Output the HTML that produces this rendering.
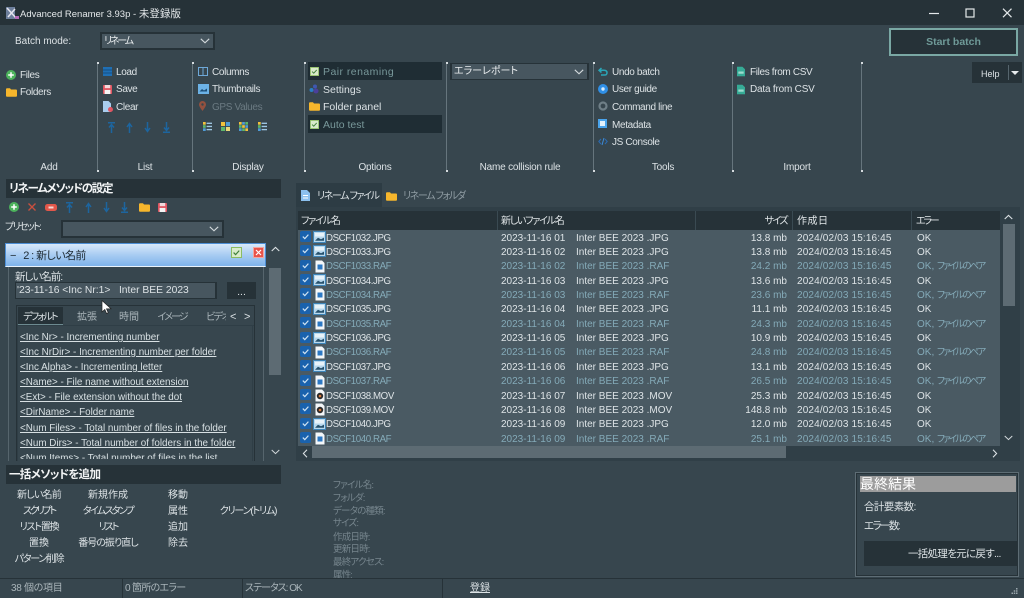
<!DOCTYPE html>
<html lang="ja"><head><meta charset="utf-8"><title>Advanced Renamer</title>
<style>
*{box-sizing:border-box}
html,body{margin:0;padding:0;background:#37464e}
body{width:1024px;height:598px;overflow:hidden;background:#37464e;position:relative;font-family:"Liberation Sans","Noto Sans CJK JP",sans-serif;font-size:10px;color:#dce2e5;font-feature-settings:"palt";filter:blur(.3px)}
.a{position:absolute}
.t{position:absolute;white-space:nowrap;line-height:14px;height:14px}
.c{transform:translateX(-50%)}
.b{letter-spacing:-.35px}
.g{letter-spacing:-.2px}
.o{font-size:10.5px}
.sep{position:absolute;top:62px;width:1px;height:110px;background:#66757d}
.sep:before,.sep:after{content:"";position:absolute;left:0;width:2px;height:2px;background:#d5dbde}
.sep:before{top:0}.sep:after{bottom:0}
.h{position:absolute;left:6px;width:275px;height:19px;background:#263238;color:#f2f4f5;font-weight:bold;font-size:11.5px;line-height:20px;padding-left:3px;white-space:nowrap}
.sel{position:absolute;background:#47565f;border:2px solid #263238;color:#e8ecee;line-height:14px;padding-left:2px;white-space:nowrap;font-size:10px}
.sel svg{position:absolute;right:3px;top:50%;margin-top:-3px}
.lk{position:absolute;left:2px;white-space:nowrap;line-height:14px;height:14px;text-decoration:underline;color:#d8e0e3;font-size:9.85px}
.row{position:absolute;left:298px;width:702px;height:14.36px;font-size:10px;line-height:14px;color:#dee4e7}
.row.p{color:#84aab8}
.row span{position:absolute;top:1.5px;white-space:nowrap}
.row svg{position:absolute;top:1px}
.row span.n{left:28px;letter-spacing:-.4px;font-size:9.7px}.m{left:203px}.i{left:278px}.s{right:213px}.d{left:499px;letter-spacing:.15px}.e{left:619px}
.row span.e i{position:static;font-style:normal;font-size:9.5px;letter-spacing:-1.9px}
.lab{position:absolute;left:333px;color:#76858d;font-size:9.5px;line-height:13px;white-space:nowrap;letter-spacing:-.8px}
.hd{position:absolute;top:0;height:19px;line-height:21px;font-size:10px;color:#e2e7e9;white-space:nowrap;padding-left:4px;border-left:1px solid #3a4a52}
</style></head><body>
<svg width="0" height="0" style="position:absolute"><defs>
<symbol id="ck" viewBox="0 0 11 11"><rect width="11" height="11" rx="2" fill="#1a62ad"/><path d="M2.800 5.600l2 2 3.600-4" fill="none" stroke="#cfe3f4" stroke-width="1.200"/></symbol>
<symbol id="jpg" viewBox="0 0 13 12"><rect x=".5" y=".5" width="12" height="11" fill="#b8d8ee" stroke="#3f85b8"/><rect x="2" y="2" width="9" height="3.500" fill="#e8f3fa"/><path d="M2 9.800l3-3 3 1.500 3-1.700v3.200z" fill="#25506c"/></symbol>
<symbol id="raf" viewBox="0 0 10 13"><path d="M.5.500h6.500l2.500 2.500v9.500h-9z" fill="#f4f7f9"/><rect x="2.500" y="4.500" width="5" height="5" fill="#2c78c4"/></symbol>
<symbol id="mov" viewBox="0 0 10 13"><path d="M.5.500h6.500l2.500 2.500v9.500h-9z" fill="#f4f7f9"/><circle cx="5" cy="7" r="3.200" fill="#2c2a2a"/><circle cx="5" cy="7" r="1.300" fill="#d97b3c"/></symbol>
<symbol id="fold" viewBox="0 0 11 9"><path d="M0 1.200q0-1 1-1h3l1 1.300h5q1 0 1 1v5.300q0 1-1 1H1q-1 0-1-1z" fill="#f6b62c"/></symbol>
<symbol id="chk" viewBox="0 0 11 11"><rect x=".5" y=".5" width="10" height="10" fill="#d9ebcb" stroke="#8cbc62"/><path d="M2.600 5.600l2 2 3.600-4" fill="none" stroke="#3f7f3a" stroke-width="1.200"/></symbol>
<symbol id="dn" viewBox="0 0 10 6"><path d="M.8.800l4.200 4 4.200-4" fill="none" stroke="#d4dadd" stroke-width="1.100"/></symbol>
<symbol id="csv" viewBox="0 0 9 11"><path d="M0 0h6l3 3v8H0z" fill="#36ab96"/><rect x="1.500" y="5.500" width="6" height="2.500" fill="#9fdccf"/></symbol>
<symbol id="grid" viewBox="0 0 10 10"><rect width="3" height="3" fill="#f2c23c"/><rect y="3.500" width="3" height="3" fill="#5cb66c"/><rect y="7" width="3" height="3" fill="#4f9bd6"/><rect x="4" y=".7" width="6" height="1.500" fill="#9fc8e4"/><rect x="4" y="4.200" width="6" height="1.500" fill="#9fc8e4"/><rect x="4" y="7.700" width="6" height="1.500" fill="#9fc8e4"/></symbol>
<symbol id="grid2" viewBox="0 0 10 10"><rect width="4.500" height="4.500" fill="#f2c23c"/><rect y="5.500" width="4.500" height="4.500" fill="#5cb66c"/><rect x="5.500" width="4.500" height="4.500" fill="#4f9bd6"/><rect x="5.500" y="5.500" width="4.500" height="4.500" fill="#e8d77a"/></symbol>
<symbol id="grid3" viewBox="0 0 10 10"><g fill="#f2c23c"><rect width="3" height="3"/><rect x="3.500" y="3.500" width="3" height="3"/><rect x="7" y="7" width="3" height="3"/></g><g fill="#4f9bd6"><rect x="3.500" width="3" height="3"/><rect x="7" y="3.500" width="3" height="3"/><rect y="7" width="3" height="3"/></g><g fill="#5cb66c"><rect x="7" width="3" height="3"/><rect y="3.500" width="3" height="3"/><rect x="3.500" y="7" width="3" height="3"/></g></symbol>
<symbol id="top" viewBox="0 0 9 11"><path d="M1 .7h7M4.500 2.500v8.500M2 5.500l2.500-3 2.500 3" fill="none" stroke="#1d659f" stroke-width="1.500"/></symbol>
<symbol id="up" viewBox="0 0 9 11"><path d="M4.500 1.500V11M2 5l2.500-3.500L7 5" fill="none" stroke="#1d659f" stroke-width="1.500"/></symbol>
<symbol id="down" viewBox="0 0 9 11"><path d="M4.500 0v9.500M2 6l2.500 3.500L7 6" fill="none" stroke="#1d659f" stroke-width="1.500"/></symbol>
<symbol id="bot" viewBox="0 0 9 11"><path d="M1 10.300h7M4.500 0v8.500M2 5.500l2.500 3 2.500-3" fill="none" stroke="#1d659f" stroke-width="1.500"/></symbol>
<symbol id="plus" viewBox="0 0 10 10"><circle cx="5" cy="5" r="5" fill="#4cb35c"/><path d="M5 2.200v5.600M2.200 5h5.600" stroke="#fff" stroke-width="1.500"/></symbol>
<symbol id="save" viewBox="0 0 10 10"><rect width="10" height="10" rx="1" fill="#e05561"/><rect x="2" y="0" width="6" height="3.500" fill="#f3d9dc"/><rect x="1.800" y="5.500" width="6.400" height="4.500" fill="#f4f4f4"/></symbol>
</defs></svg>

<!-- Title bar -->
<div class="a" style="left:0;top:0;width:1024px;height:25px;background:#263238"></div>
<svg class="a" style="left:5px;top:6px" width="14" height="14" viewBox="0 0 14 14"><rect x="1" y="1" width="9" height="12" fill="#6d7f9c"/><path d="M2 2l9 10M10 3l-7 8" stroke="#e6e6f0" stroke-width="1.500"/><rect x="10" y="10" width="4" height="3" fill="#b56bb8"/></svg>
<div class="t" style="left:20px;top:7px;font-size:9.500px;color:#e4e8ea;line-height:15px">Advanced Renamer 3.93p - <span style="font-size:10.500px">未登録版</span></div>
<svg class="a" style="left:929px;top:8px" width="84" height="10" viewBox="0 0 84 10"><path d="M0 5.500h10" stroke="#e4e8ea" stroke-width="1.200"/><rect x="37" y="1" width="8" height="8" fill="none" stroke="#e4e8ea" stroke-width="1.200"/><path d="M74 .7l8.500 8.500M82.500.7L74 9.200" stroke="#e4e8ea" stroke-width="1.200"/></svg>

<!-- Batch mode -->
<div class="t" style="left:15px;top:35px">Batch mode:</div>
<div class="sel" style="left:100px;top:32px;width:115px;height:18px;line-height:15px;letter-spacing:-2.200px">リネーム<svg width="10" height="6"><use href="#dn"/></svg></div>

<div class="a" style="left:889px;top:28px;width:129px;height:28px;background:#263238;border:2px solid #7aa8a4;color:#6f9a98;font-weight:bold;font-size:10.500px;line-height:25px;text-align:center">Start batch</div>
<div class="a" style="left:972px;top:62px;width:50px;height:21px;background:#263238"></div>
<div class="t" style="left:981px;top:67px;font-size:9px">Help</div>
<div class="a" style="left:1008px;top:65px;width:1px;height:15px;background:#56656d"></div>
<div class="a" style="left:1011px;top:71px;border:4px solid transparent;border-top:4px solid #e6eaec"></div>

<!-- Separators -->
<div class="sep" style="left:97px"></div><div class="sep" style="left:192px"></div><div class="sep" style="left:304px"></div><div class="sep" style="left:446px"></div><div class="sep" style="left:593px"></div><div class="sep" style="left:732px"></div><div class="sep" style="left:861px"></div>

<!-- Add -->
<svg class="a" style="left:6px;top:70px" width="10" height="10"><use href="#plus"/></svg>
<div class="t b" style="left:20px;top:69px">Files</div>
<svg class="a" style="left:6px;top:88px" width="11" height="9"><use href="#fold"/></svg>
<div class="t b" style="left:20px;top:86px">Folders</div>
<!-- List -->
<svg class="a" style="left:103px;top:67px" width="9" height="9"><rect width="9" height="9" fill="#1f6fb4"/><path d="M0 3h9M0 6h9" stroke="#144f84"/></svg>
<div class="t b" style="left:116px;top:66px">Load</div>
<svg class="a" style="left:103px;top:85px" width="9" height="9"><use href="#save"/></svg>
<div class="t b" style="left:116px;top:83px">Save</div>
<svg class="a" style="left:103px;top:101px" width="10" height="11" viewBox="0 0 10 11"><path d="M0 0h5.500l2.500 2.500V11H0z" fill="#a9cdee"/><circle cx="7.500" cy="8.500" r="2.500" fill="#e05561"/></svg>
<div class="t b" style="left:116px;top:101px">Clear</div>
<svg class="a" style="left:107px;top:122px" width="9" height="11"><use href="#top"/></svg>
<svg class="a" style="left:125px;top:122px" width="9" height="11"><use href="#up"/></svg>
<svg class="a" style="left:143px;top:122px" width="9" height="11"><use href="#down"/></svg>
<svg class="a" style="left:162px;top:122px" width="9" height="11"><use href="#bot"/></svg>
<!-- Display -->
<svg class="a" style="left:198px;top:67px" width="10" height="9"><rect x=".5" y=".5" width="9" height="8" fill="none" stroke="#6ea8d8"/><path d="M5 0v9" stroke="#6ea8d8"/></svg>
<div class="t b" style="left:212px;top:66px">Columns</div>
<svg class="a" style="left:198px;top:84px" width="11" height="10"><rect width="11" height="10" fill="#6cb2e6"/><path d="M1.500 7.500l2.500-2.500 2 1.500 3-2v3z" fill="#1d4f78"/></svg>
<div class="t b" style="left:212px;top:83px">Thumbnails</div>
<svg class="a" style="left:199px;top:101px" width="7" height="10" viewBox="0 0 7 10"><path d="M3.500 10C1 6.500 0 5 0 3.500a3.500 3.500 0 0 1 7 0C7 5 6 6.500 3.500 10z" fill="#93513f"/><circle cx="3.500" cy="3.500" r="1.200" fill="#37464e"/></svg>
<div class="t b" style="left:212px;top:101px;color:#6b7a82">GPS Values</div>
<svg class="a" style="left:203px;top:122px" width="9" height="9" viewBox="0 0 10 10"><use href="#grid"/></svg>
<svg class="a" style="left:221px;top:122px" width="9" height="9" viewBox="0 0 10 10"><use href="#grid2"/></svg>
<svg class="a" style="left:239px;top:122px" width="9" height="9" viewBox="0 0 10 10"><use href="#grid3"/></svg>
<svg class="a" style="left:258px;top:122px" width="9" height="9" viewBox="0 0 10 10"><use href="#grid"/></svg>
<!-- Options -->
<div class="a" style="left:308px;top:62px;width:134px;height:18px;background:#1f2d34"></div>
<div class="a" style="left:308px;top:115px;width:134px;height:18px;background:#1f2d34"></div>
<svg class="a" style="left:310px;top:67px" width="9" height="9"><use href="#chk"/></svg>
<div class="t o" style="left:323px;top:65px;color:#78989a;letter-spacing:.45px">Pair renaming</div>
<svg class="a" style="left:309px;top:84px" width="10" height="10" viewBox="0 0 10 10"><circle cx="2.500" cy="6" r="2" fill="#2b7dc4"/><circle cx="6" cy="2.500" r="2" fill="#3f57b0"/><circle cx="7" cy="7" r="2.500" fill="#4b3f9a"/></svg>
<div class="t o" style="left:323px;top:83px">Settings</div>
<svg class="a" style="left:309px;top:102px" width="11" height="9"><use href="#fold"/></svg>
<div class="t o" style="left:323px;top:100px">Folder panel</div>
<svg class="a" style="left:310px;top:120px" width="9" height="9"><use href="#chk"/></svg>
<div class="t o" style="left:323px;top:118px;color:#78989a">Auto test</div>
<!-- Collision -->
<div class="sel" style="left:450px;top:63px;width:139px;height:17px;line-height:15px;border-width:1px 2px;padding-left:2px">エラーレポート<svg width="10" height="6"><use href="#dn"/></svg></div>
<!-- Tools -->
<svg class="a" style="left:598px;top:67px" width="10" height="9" viewBox="0 0 10 9"><path d="M3.500 1L1 3.300l2.500 2.200M1 3.300h5q3 0 3 2.500T6 8H3" fill="none" stroke="#2aa6b8" stroke-width="1.500"/></svg>
<div class="t b" style="left:612px;top:66px">Undo batch</div>
<svg class="a" style="left:598px;top:84px" width="10" height="10"><circle cx="5" cy="5" r="5" fill="#2f8fe6"/><circle cx="5" cy="5" r="1.700" fill="#d8ecfb"/></svg>
<div class="t b" style="left:612px;top:83px">User guide</div>
<svg class="a" style="left:598px;top:101px" width="10" height="10"><circle cx="5" cy="5" r="3.500" fill="none" stroke="#6f7f87" stroke-width="2.200"/></svg>
<div class="t b" style="left:612px;top:101px">Command line</div>
<svg class="a" style="left:598px;top:119px" width="10" height="10"><rect width="9" height="9" fill="#4aa4ec"/><rect x="2" y="2" width="5" height="5" fill="#e4f2fc"/></svg>
<div class="t b" style="left:612px;top:119px">Metadata</div>
<svg class="a" style="left:598px;top:137px" width="10" height="9" viewBox="0 0 10 9"><path d="M3 2L.8 4.500 3 7M7 2l2.200 2.500L7 7" fill="none" stroke="#2a6bb4"/><path d="M6 1L4 8" stroke="#3f8cd8"/></svg>
<div class="t b" style="left:612px;top:136px">JS Console</div>
<!-- Import -->
<svg class="a" style="left:737px;top:66px" width="8" height="11" viewBox="0 0 9 11"><use href="#csv"/></svg>
<div class="t b" style="left:750px;top:66px">Files from CSV</div>
<svg class="a" style="left:737px;top:84px" width="8" height="11" viewBox="0 0 9 11"><use href="#csv"/></svg>
<div class="t g" style="left:750px;top:83px">Data from CSV</div>
<!-- Group labels -->
<div class="t c g" style="left:49px;top:161px">Add</div>
<div class="t c g" style="left:145px;top:161px">List</div>
<div class="t c g" style="left:248px;top:161px">Display</div>
<div class="t c g" style="left:375px;top:161px">Options</div>
<div class="t c g" style="left:520px;top:161px">Name collision rule</div>
<div class="t c g" style="left:663px;top:161px">Tools</div>
<div class="t c g" style="left:797px;top:161px">Import</div>

<!-- Left panel -->
<div class="h" style="top:179px;letter-spacing:-1.300px">リネームメソッドの設定</div>
<svg class="a" style="left:9px;top:202px" width="10" height="10"><use href="#plus"/></svg>
<svg class="a" style="left:28px;top:203px" width="8" height="8"><path d="M.5.500l7 7M7.500.500l-7 7" stroke="#c9503f" stroke-width="1.400"/></svg>
<svg class="a" style="left:45px;top:204px" width="12" height="7"><rect width="12" height="7" rx="2.500" fill="#e2574a"/><rect x="3.500" y="2.500" width="5" height="2" fill="#f7d6d2"/></svg>
<svg class="a" style="left:65px;top:202px" width="9" height="11"><use href="#top"/></svg>
<svg class="a" style="left:84px;top:202px" width="9" height="11"><use href="#up"/></svg>
<svg class="a" style="left:102px;top:202px" width="9" height="11"><use href="#down"/></svg>
<svg class="a" style="left:120px;top:202px" width="9" height="11"><use href="#bot"/></svg>
<svg class="a" style="left:139px;top:203px" width="11" height="9"><use href="#fold"/></svg>
<svg class="a" style="left:158px;top:203px" width="9" height="9"><use href="#save"/></svg>
<div class="t" style="left:5px;top:221px;letter-spacing:-1.700px">プリセット:</div>
<div class="sel" style="left:61px;top:220px;width:163px;height:18px"><svg width="10" height="6"><use href="#dn"/></svg></div>

<div class="a" style="left:8px;top:266px;width:256px;height:195px;border-left:1px solid #56656d;border-right:1px solid #56656d"></div>
<div class="a" style="left:5px;top:243px;width:261px;height:24px;background:linear-gradient(#d9e9fa,#a8ccf2 50%,#7fb3ea);border:1px solid #4d8fd6;border-bottom:1px solid #eaf3fb"></div>
<div class="t" style="left:10px;top:249px;color:#1d2a33;font-size:11px;letter-spacing:-.6px">−&nbsp;&nbsp;&nbsp;2 : 新しい名前</div>
<svg class="a" style="left:231px;top:247px" width="11" height="11"><use href="#chk"/></svg>
<svg class="a" style="left:253px;top:247px" width="11" height="11"><rect x=".5" y=".5" width="10" height="10" fill="#e8534a" stroke="#f2a6a0"/><path d="M3 3l5 5M8 3L3 8" stroke="#fff" stroke-width="1.200"/></svg>

<svg class="a" style="left:271px;top:246px" width="9" height="6" viewBox="0 0 10 6"><path d="M.8 5.200L5 1.200l4.200 4" fill="none" stroke="#dde3e6" stroke-width="1.200"/></svg>
<div class="a" style="left:269px;top:268px;width:12px;height:107px;background:#5d6b73"></div>
<svg class="a" style="left:271px;top:449px" width="9" height="6"><use href="#dn"/></svg>

<div class="t" style="left:15px;top:270px;font-size:10.500px;letter-spacing:-1px">新しい名前:</div>
<div class="a" style="left:15px;top:282px;width:202px;height:17px;background:#47565f;border:1px solid #263238;border-width:1px 2px 1px 1px;overflow:hidden"><div class="t" style="left:1px;top:1px;font-size:10.300px">'23-11-16 &lt;Inc Nr:1&gt;&nbsp;&nbsp; Inter BEE 2023</div></div>
<div class="a" style="left:227px;top:282px;width:29px;height:17px;background:#263238;text-align:center;line-height:20px;font-size:10.500px">...</div>

<div class="a" style="left:16px;top:305px;width:239px;height:156px;border:1px solid #263238;border-bottom:0"></div>
<div class="a" style="left:18px;top:307px;width:45px;height:18px;background:#263238;border-bottom:1px solid #6d8a90"></div>
<div class="a" style="left:17px;top:325px;width:237px;height:1px;background:#2f3e46"></div>
<div class="a" style="left:17px;top:326px;width:1px;height:135px;background:#2f3e46"></div>
<div class="a" style="left:252px;top:326px;width:1px;height:135px;background:#2f3e46"></div>
<div class="t c" style="left:40px;top:311px;letter-spacing:-1.800px">デフォルト</div>
<div class="t c" style="left:87px;top:311px;color:#aab5ba">拡張</div>
<div class="t c" style="left:129px;top:311px;color:#aab5ba">時間</div>
<div class="t c" style="left:172px;top:311px;color:#aab5ba;letter-spacing:-2px">イメージ</div>
<div class="a" style="left:206px;top:309px;width:20px;height:16px;overflow:hidden"><div class="t" style="left:0;top:2px;color:#aab5ba;letter-spacing:-1.500px">ビデオ</div></div>
<div class="t" style="left:230px;top:310px;font-size:11px">&lt;</div>
<div class="t" style="left:244px;top:310px;font-size:11px">&gt;</div>

<div class="a" style="left:18px;top:328px;width:234px;height:131px;overflow:hidden">
<div class="lk" style="top:3px">&lt;Inc Nr&gt; - Incrementing number</div>
<div class="lk" style="top:18px">&lt;Inc NrDir&gt; - Incrementing number per folder</div>
<div class="lk" style="top:33px">&lt;Inc Alpha&gt; - Incrementing letter</div>
<div class="lk" style="top:48px">&lt;Name&gt; - File name without extension</div>
<div class="lk" style="top:63px">&lt;Ext&gt; - File extension without the dot</div>
<div class="lk" style="top:78px">&lt;DirName&gt; - Folder name</div>
<div class="lk" style="top:94px">&lt;Num Files&gt; - Total number of files in the folder</div>
<div class="lk" style="top:109px">&lt;Num Dirs&gt; - Total number of folders in the folder</div>
<div class="lk" style="top:124px">&lt;Num Items&gt; - Total number of files in the list</div>
</div>

<svg class="a" style="left:101px;top:300px" width="11" height="15" viewBox="0 0 11 15"><path d="M1 .5v11.500l2.800-2.500 1.800 4 1.700-.8-1.800-3.900H10z" fill="#fff" stroke="#222" stroke-width=".7"/></svg>

<!-- Method list -->
<div class="a" style="left:0;top:461px;width:295px;height:4px;background:#37464e"></div>
<div class="h" style="top:465px;line-height:21px;letter-spacing:-.7px">一括メソッドを追加</div>
<div class="t c" style="left:39px;top:489px;letter-spacing:-.8px">新しい名前</div>
<div class="t c" style="left:108px;top:489px">新規作成</div>
<div class="t c" style="left:178px;top:489px">移動</div>
<div class="t c" style="left:39px;top:505px;letter-spacing:-2.200px">スクリプト</div>
<div class="t c" style="left:108px;top:505px;letter-spacing:-1.700px">タイムスタンプ</div>
<div class="t c" style="left:178px;top:505px">属性</div>
<div class="t c" style="left:248px;top:505px;letter-spacing:-1.200px">クリーン(トリム)</div>
<div class="t c" style="left:39px;top:521px;letter-spacing:-1.200px">リスト置換</div>
<div class="t c" style="left:108px;top:521px;letter-spacing:-2px">リスト</div>
<div class="t c" style="left:178px;top:521px">追加</div>
<div class="t c" style="left:39px;top:537px">置換</div>
<div class="t c" style="left:108px;top:537px;letter-spacing:-1px">番号の振り直し</div>
<div class="t c" style="left:178px;top:537px">除去</div>
<div class="t c" style="left:39px;top:553px;letter-spacing:-1.300px">パターン削除</div>

<!-- Tabs -->
<div class="a" style="left:296px;top:183px;width:86px;height:25px;background:#2d3c44;border-bottom:1px solid #6d8a90"></div>
<svg class="a" style="left:301px;top:190px" width="9" height="11" viewBox="0 0 9 11"><path d="M0 0h6l3 3v8H0z" fill="#8cc0ee"/><rect x="2" y="5" width="5" height="1" fill="#fff"/><rect x="2" y="7.500" width="5" height="1" fill="#fff"/></svg>
<div class="t" style="left:317px;top:190px;letter-spacing:-1.400px">リネーム ファイル</div>
<svg class="a" style="left:386px;top:192px" width="11" height="9"><use href="#fold"/></svg>
<div class="t" style="left:403px;top:190px;color:#8f9ca3;letter-spacing:-1.400px">リネーム フォルダ</div>

<!-- Table -->
<div class="a" style="left:296px;top:207px;width:724px;height:254px;background:#303f47"></div>
<div class="a" style="left:298px;top:211px;width:702px;height:19px;background:#263238"></div>
<div class="a" style="left:298px;top:211px;width:702px;height:19px">
<div class="hd" style="left:0;width:199px;border:0;padding-left:3px;letter-spacing:-1.200px">ファイル名</div>
<div class="hd" style="left:199px;width:198px;padding-left:3px;letter-spacing:-1.250px">新しいファイル名</div>
<div class="hd" style="left:397px;width:97px;text-align:right;padding-right:5px;letter-spacing:-1.600px">サイズ</div>
<div class="hd" style="left:494px;width:119px;letter-spacing:.5px">作成日</div>
<div class="hd" style="left:613px;width:89px;padding-left:4px;letter-spacing:-2.200px">エラー</div>
</div>
<div class="a" style="left:298px;top:230px;width:702px;height:216px;background:#4a5a63"></div>

<div class="row" style="top:230px"><svg style="left:2px" width="11" height="11"><use href="#ck"/></svg><svg style="left:15px" width="13" height="12"><use href="#jpg"/></svg><span class="n">DSCF1032.JPG</span><span class="m">2023-11-16 01</span><span class="i">Inter BEE 2023 .JPG</span><span class="s">13.8 mb</span><span class="d">2024/02/03 15:16:45</span><span class="e">OK</span></div>
<div class="row" style="top:244.400px"><svg style="left:2px" width="11" height="11"><use href="#ck"/></svg><svg style="left:15px" width="13" height="12"><use href="#jpg"/></svg><span class="n">DSCF1033.JPG</span><span class="m">2023-11-16 02</span><span class="i">Inter BEE 2023 .JPG</span><span class="s">13.8 mb</span><span class="d">2024/02/03 15:16:45</span><span class="e">OK</span></div>
<div class="row p" style="top:258.700px"><svg style="left:2px" width="11" height="11"><use href="#ck"/></svg><svg style="left:17px" width="10" height="13"><use href="#raf"/></svg><span class="n">DSCF1033.RAF</span><span class="m">2023-11-16 02</span><span class="i">Inter BEE 2023 .RAF</span><span class="s">24.2 mb</span><span class="d">2024/02/03 15:16:45</span><span class="e">OK, <i>ファイルのペア</i></span></div>
<div class="row" style="top:273.100px"><svg style="left:2px" width="11" height="11"><use href="#ck"/></svg><svg style="left:15px" width="13" height="12"><use href="#jpg"/></svg><span class="n">DSCF1034.JPG</span><span class="m">2023-11-16 03</span><span class="i">Inter BEE 2023 .JPG</span><span class="s">13.6 mb</span><span class="d">2024/02/03 15:16:45</span><span class="e">OK</span></div>
<div class="row p" style="top:287.400px"><svg style="left:2px" width="11" height="11"><use href="#ck"/></svg><svg style="left:17px" width="10" height="13"><use href="#raf"/></svg><span class="n">DSCF1034.RAF</span><span class="m">2023-11-16 03</span><span class="i">Inter BEE 2023 .RAF</span><span class="s">23.6 mb</span><span class="d">2024/02/03 15:16:45</span><span class="e">OK, <i>ファイルのペア</i></span></div>
<div class="row" style="top:301.800px"><svg style="left:2px" width="11" height="11"><use href="#ck"/></svg><svg style="left:15px" width="13" height="12"><use href="#jpg"/></svg><span class="n">DSCF1035.JPG</span><span class="m">2023-11-16 04</span><span class="i">Inter BEE 2023 .JPG</span><span class="s">11.1 mb</span><span class="d">2024/02/03 15:16:45</span><span class="e">OK</span></div>
<div class="row p" style="top:316.200px"><svg style="left:2px" width="11" height="11"><use href="#ck"/></svg><svg style="left:17px" width="10" height="13"><use href="#raf"/></svg><span class="n">DSCF1035.RAF</span><span class="m">2023-11-16 04</span><span class="i">Inter BEE 2023 .RAF</span><span class="s">24.3 mb</span><span class="d">2024/02/03 15:16:45</span><span class="e">OK, <i>ファイルのペア</i></span></div>
<div class="row" style="top:330.500px"><svg style="left:2px" width="11" height="11"><use href="#ck"/></svg><svg style="left:15px" width="13" height="12"><use href="#jpg"/></svg><span class="n">DSCF1036.JPG</span><span class="m">2023-11-16 05</span><span class="i">Inter BEE 2023 .JPG</span><span class="s">10.9 mb</span><span class="d">2024/02/03 15:16:45</span><span class="e">OK</span></div>
<div class="row p" style="top:344.900px"><svg style="left:2px" width="11" height="11"><use href="#ck"/></svg><svg style="left:17px" width="10" height="13"><use href="#raf"/></svg><span class="n">DSCF1036.RAF</span><span class="m">2023-11-16 05</span><span class="i">Inter BEE 2023 .RAF</span><span class="s">24.8 mb</span><span class="d">2024/02/03 15:16:45</span><span class="e">OK, <i>ファイルのペア</i></span></div>
<div class="row" style="top:359.200px"><svg style="left:2px" width="11" height="11"><use href="#ck"/></svg><svg style="left:15px" width="13" height="12"><use href="#jpg"/></svg><span class="n">DSCF1037.JPG</span><span class="m">2023-11-16 06</span><span class="i">Inter BEE 2023 .JPG</span><span class="s">13.1 mb</span><span class="d">2024/02/03 15:16:45</span><span class="e">OK</span></div>
<div class="row p" style="top:373.600px"><svg style="left:2px" width="11" height="11"><use href="#ck"/></svg><svg style="left:17px" width="10" height="13"><use href="#raf"/></svg><span class="n">DSCF1037.RAF</span><span class="m">2023-11-16 06</span><span class="i">Inter BEE 2023 .RAF</span><span class="s">26.5 mb</span><span class="d">2024/02/03 15:16:45</span><span class="e">OK, <i>ファイルのペア</i></span></div>
<div class="row" style="top:388px"><svg style="left:2px" width="11" height="11"><use href="#ck"/></svg><svg style="left:17px" width="10" height="13"><use href="#mov"/></svg><span class="n">DSCF1038.MOV</span><span class="m">2023-11-16 07</span><span class="i">Inter BEE 2023 .MOV</span><span class="s">25.3 mb</span><span class="d">2024/02/03 15:16:45</span><span class="e">OK</span></div>
<div class="row" style="top:402.300px"><svg style="left:2px" width="11" height="11"><use href="#ck"/></svg><svg style="left:17px" width="10" height="13"><use href="#mov"/></svg><span class="n">DSCF1039.MOV</span><span class="m">2023-11-16 08</span><span class="i">Inter BEE 2023 .MOV</span><span class="s">148.8 mb</span><span class="d">2024/02/03 15:16:45</span><span class="e">OK</span></div>
<div class="row" style="top:416.700px"><svg style="left:2px" width="11" height="11"><use href="#ck"/></svg><svg style="left:15px" width="13" height="12"><use href="#jpg"/></svg><span class="n">DSCF1040.JPG</span><span class="m">2023-11-16 09</span><span class="i">Inter BEE 2023 .JPG</span><span class="s">12.0 mb</span><span class="d">2024/02/03 15:16:45</span><span class="e">OK</span></div>
<div class="row p" style="top:431px"><svg style="left:2px" width="11" height="11"><use href="#ck"/></svg><svg style="left:17px" width="10" height="13"><use href="#raf"/></svg><span class="n">DSCF1040.RAF</span><span class="m">2023-11-16 09</span><span class="i">Inter BEE 2023 .RAF</span><span class="s">25.1 mb</span><span class="d">2024/02/03 15:16:45</span><span class="e">OK, <i>ファイルのペア</i></span></div>

<!-- Table scrollbars -->
<svg class="a" style="left:1004px;top:214px" width="9" height="6" viewBox="0 0 10 6"><path d="M.8 5.200L5 1.200l4.200 4" fill="none" stroke="#dde3e6" stroke-width="1.200"/></svg>
<div class="a" style="left:1003px;top:224px;width:12px;height:82px;background:#5d6b73"></div>
<svg class="a" style="left:1004px;top:435px" width="9" height="6"><use href="#dn"/></svg>
<svg class="a" style="left:302px;top:449px" width="6" height="9" viewBox="0 0 6 10"><path d="M5.200.8L1.200 5l4 4.200" fill="none" stroke="#dde3e6" stroke-width="1.200"/></svg>
<div class="a" style="left:312px;top:446px;width:474px;height:12px;background:#5d6b73"></div>
<svg class="a" style="left:992px;top:449px" width="6" height="9" viewBox="0 0 6 10"><path d="M.8.800l4 4.200-4 4.200" fill="none" stroke="#dde3e6" stroke-width="1.200"/></svg>

<!-- Info labels -->
<div class="lab" style="top:479px">ファイル名:</div>
<div class="lab" style="top:492px">フォルダ:</div>
<div class="lab" style="top:505px">データの種類:</div>
<div class="lab" style="top:517px">サイズ:</div>
<div class="lab" style="top:531px">作成日時:</div>
<div class="lab" style="top:543px">更新日時:</div>
<div class="lab" style="top:556px">最終アクセス:</div>
<div class="lab" style="top:569px;height:9px;overflow:hidden">属性:</div>

<!-- Result panel -->
<div class="a" style="left:855px;top:472px;width:164px;height:105px;border:1px solid #5e6d75;outline:1px solid #263238;outline-offset:-2px"></div>
<div class="a" style="left:860px;top:476px;width:156px;height:16px;background:#9c9c9c;color:#fff;font-size:14px;line-height:16px;white-space:nowrap">最終結果</div>
<div class="t" style="left:864px;top:500px;font-size:10.500px;letter-spacing:-.6px">合計要素数:</div>
<div class="t" style="left:864px;top:519px;font-size:10.500px;letter-spacing:-1.600px">エラー数:</div>
<div class="a" style="left:864px;top:541px;width:153px;height:25px;background:#263238"></div>
<div class="t" style="left:908px;top:547px;font-size:10.500px;letter-spacing:-.7px">一括処理を元に戻す...</div>

<!-- Status bar -->
<div class="a" style="left:0;top:578px;width:1024px;height:1px;background:#263238"></div>
<div class="t" style="left:11px;top:582px;color:#aab5ba;letter-spacing:-.3px">38 個の項目</div>
<div class="a" style="left:122px;top:579px;width:1px;height:19px;background:#263238"></div>
<div class="t" style="left:125px;top:582px;color:#aab5ba;letter-spacing:-.7px">0 箇所のエラー</div>
<div class="a" style="left:242px;top:579px;width:1px;height:19px;background:#263238"></div>
<div class="t" style="left:245px;top:582px;color:#aab5ba;letter-spacing:-1px">ステータス: OK</div>
<div class="a" style="left:442px;top:579px;width:1px;height:19px;background:#263238"></div>
<div class="t" style="left:470px;top:582px;text-decoration:underline">登録</div>
<svg class="a" style="left:1011px;top:588px" width="7" height="6" viewBox="0 0 8 8"><g fill="#9aa6ac"><rect x="6" y="0" width="2" height="2"/><rect x="3" y="3" width="2" height="2"/><rect x="6" y="3" width="2" height="2"/><rect x="0" y="6" width="2" height="2"/><rect x="3" y="6" width="2" height="2"/><rect x="6" y="6" width="2" height="2"/></g></svg>
</body></html>
